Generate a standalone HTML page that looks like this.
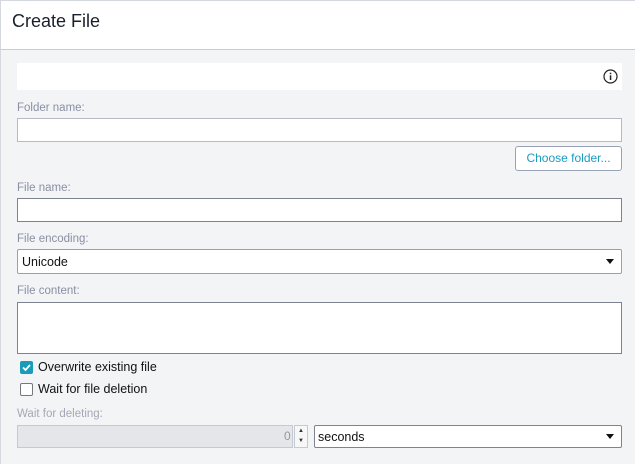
<!DOCTYPE html>
<html><head><style>
body{margin:0;width:635px;height:464px;overflow:hidden;font-family:"Liberation Sans",sans-serif;background:#f3f4f6;position:relative}
.hdr{position:absolute;left:0;top:0;width:634px;height:48px;background:#fff;border-top:1px solid #d5d8de;border-left:1px solid #d5d8de;border-bottom:1px solid #c8cbd2}
.hdr h1{margin:0;position:absolute;left:11px;top:10px;font-size:18px;font-weight:normal;color:#1a1f2b}
.lb{position:absolute;left:17px;font-size:11.5px;color:#8a8fa3}
.in{position:absolute;left:17px;width:605px;background:#fff;border:1px solid #9aa0ae;box-sizing:border-box}
.t{position:absolute;font-size:12.5px;color:#111}
.lborder{position:absolute;left:0;top:50px;width:1px;height:414px;background:#d5d8de}
</style></head><body>
<div class="hdr"><h1>Create File</h1></div>
<div class="lborder"></div>
<div style="position:absolute;left:17px;top:63px;width:605px;height:27px;background:#fff"></div>
<svg style="position:absolute;left:603px;top:69px" width="15" height="15" viewBox="0 0 15 15"><circle cx="7.5" cy="7.5" r="6.5" fill="none" stroke="#222" stroke-width="1.2"/><rect x="6.8" y="6.3" width="1.5" height="4.7" fill="#222"/><rect x="6.8" y="3.7" width="1.5" height="1.5" fill="#222"/></svg>
<div class="lb" style="top:102px">Folder name:</div>
<div class="in" style="top:118px;height:24px;border-color:#b5bac6"></div>
<div style="position:absolute;left:515px;top:146px;width:107px;height:25px;box-sizing:border-box;border:1px solid #9aa3b5;border-radius:3px;background:#fff;color:#1a9cc0;font-size:12px;text-align:center;line-height:23px">Choose folder...</div>
<div class="lb" style="top:182px">File name:</div>
<div class="in" style="top:198px;height:24px;border-color:#7d8390"></div>
<div class="lb" style="top:233px">File encoding:</div>
<div class="in" style="top:249px;height:25px;border-color:#9aa0ae;border-radius:2px"></div>
<div class="t" style="left:22px;top:255px">Unicode</div>
<div style="position:absolute;left:606px;top:259px;border-left:4px solid transparent;border-right:4px solid transparent;border-top:5px solid #111"></div>
<div class="lb" style="top:285px">File content:</div>
<div class="in" style="top:302px;height:52px;border-color:#7d8390"></div>
<div style="position:absolute;left:20px;top:361px;width:13px;height:13px;background:#1a9cb8;border-radius:2px"></div>
<svg style="position:absolute;left:20px;top:361px" width="13" height="13"><path d="M3 6.5l2.5 2.5 4.5-5" fill="none" stroke="#fff" stroke-width="1.8"/></svg>
<div class="t" style="left:38px;top:360px">Overwrite existing file</div>
<div style="position:absolute;left:20px;top:383px;width:13px;height:13px;box-sizing:border-box;border:1px solid #777;border-radius:2px;background:#fff"></div>
<div class="t" style="left:38px;top:382px">Wait for file deletion</div>
<div class="lb" style="top:408px;color:#a4a8b4">Wait for deleting:</div>
<div style="position:absolute;left:17px;top:425px;width:276px;height:23px;box-sizing:border-box;background:#e4e6ea;border:1px solid #c5c9d1"></div>
<div style="position:absolute;left:284px;top:429px;font-size:12px;color:#999">0</div>
<div style="position:absolute;left:294px;top:425px;width:14px;height:23px;box-sizing:border-box;border:1px solid #c5c9d1;background:#f7f7f8;font-size:6px;line-height:10px;text-align:center;color:#333">▲<br>▼</div>
<div style="position:absolute;left:314px;top:425px;width:308px;height:23px;box-sizing:border-box;border:1px solid #7d8390;border-radius:2px;background:#fff"></div>
<div class="t" style="left:318px;top:430px">seconds</div>
<div style="position:absolute;left:606px;top:434px;border-left:4px solid transparent;border-right:4px solid transparent;border-top:5px solid #111"></div>
</body></html>
